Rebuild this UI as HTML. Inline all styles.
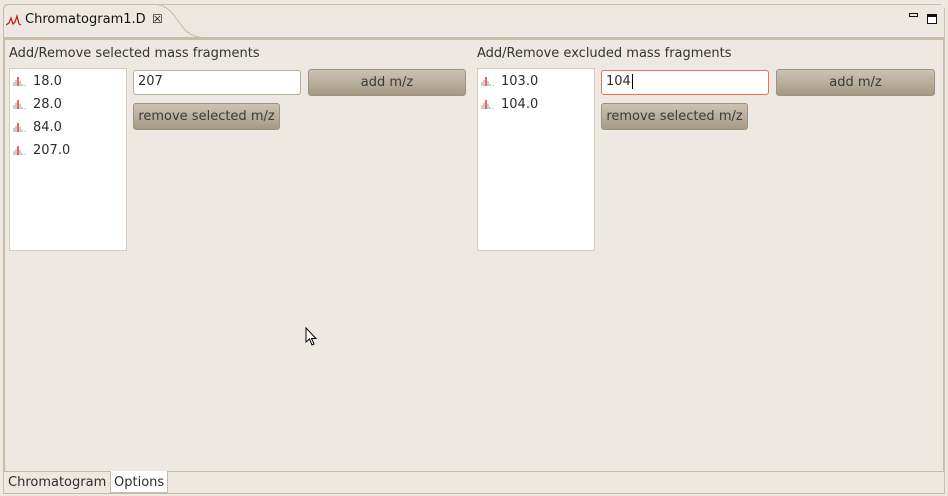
<!DOCTYPE html>
<html><head><style>
*{margin:0;padding:0;box-sizing:border-box}
body{width:948px;height:496px;background:#ede9e2;font-family:"DejaVu Sans","Liberation Sans",sans-serif;font-size:13px;color:#2e2e2e;position:relative;overflow:hidden}
.a{position:absolute}
.frame{left:3px;top:4px;width:942px;height:490px;border:1px solid #c9c0b0;border-radius:6px 6px 0 0;background:#ede9e2}
.hdr{left:4px;top:5px;width:940px;height:33px;background:#ece8e1}
.line{left:4px;top:37px;width:940px;height:3px;background:#c8bca9}
.list{background:#fff;border:1px solid #d6cdbd}
.item{position:absolute;left:3px;font-size:13px}
.ic{display:inline-block;width:14px;height:10px;vertical-align:-1px;margin-right:6px}
.inp{background:#fff;border:1px solid #b8ae9d;border-radius:3px;height:25px;padding:3px 4px;font-size:13px}
.btn{border:1px solid #9e9282;border-radius:3px;background:linear-gradient(#cdc3b3,#a69985);text-align:center;font-size:13px;color:#3a3a3a;line-height:25px;height:27px}
.lbl{font-size:13px;color:#333}
</style></head><body>
<div class="a frame"></div>
<div class="a hdr"></div>
<svg class="a" style="left:3px;top:4px" width="210" height="36"><path d="M0.5 36 V6 Q0.5 0.5 6 0.5 H152 Q162 0.5 170 10 L182 26 Q190 34 205 34" fill="#ede9e2" stroke="#c5bba9"/></svg>
<div class="a line"></div>
<svg class="a" style="left:6px;top:14px" width="16" height="12"><path d="M0 11 L3 9 L5 4 L7 10 L9 8 L11 2 L13 10 L15 11" fill="none" stroke="#d01010" stroke-width="1.2"/></svg>
<div class="a" style="left:25px;top:12px;font-size:13px;color:#111">Chromatogram1.D</div>
<div class="a" style="left:152px;top:12px;font-size:12px;color:#111">&#x2612;</div>
<div class="a" style="left:909px;top:13px;width:9px;height:4px;border:1.5px solid #111"></div>
<div class="a" style="left:927px;top:14px;width:10px;height:10px;border:1.5px solid #111;border-top-width:3px;background:#fff"></div>
<div class="a" style="left:4px;top:40px;width:940px;height:431px;border-left:1px solid #c5bba9;border-right:1px solid #c5bba9"></div>

<div class="a lbl" style="left:9px;top:46px">Add/Remove selected mass fragments</div>
<div class="a list" style="left:9px;top:68px;width:118px;height:183px">
 <div class="item" style="top:5px"><svg class="ic"><path d="M1 10V6M3 10V4M7 10V5M9 10V8M12 10V9" stroke="#999" stroke-width="1"/><path d="M5 10V1" stroke="#d00" stroke-width="1.2"/></svg>18.0</div>
 <div class="item" style="top:28px"><svg class="ic"><path d="M1 10V6M3 10V4M7 10V5M9 10V8M12 10V9" stroke="#999" stroke-width="1"/><path d="M5 10V1" stroke="#d00" stroke-width="1.2"/></svg>28.0</div>
 <div class="item" style="top:51px"><svg class="ic"><path d="M1 10V6M3 10V4M7 10V5M9 10V8M12 10V9" stroke="#999" stroke-width="1"/><path d="M5 10V1" stroke="#d00" stroke-width="1.2"/></svg>84.0</div>
 <div class="item" style="top:74px"><svg class="ic"><path d="M1 10V6M3 10V4M7 10V5M9 10V8M12 10V9" stroke="#999" stroke-width="1"/><path d="M5 10V1" stroke="#d00" stroke-width="1.2"/></svg>207.0</div>
</div>
<div class="a inp" style="left:133px;top:70px;width:168px">207</div>
<div class="a btn" style="left:308px;top:69px;width:158px">add m/z</div>
<div class="a btn" style="left:133px;top:103px;width:147px">remove selected m/z</div>

<div class="a lbl" style="left:477px;top:46px">Add/Remove excluded mass fragments</div>
<div class="a list" style="left:477px;top:68px;width:118px;height:183px">
 <div class="item" style="top:5px"><svg class="ic"><path d="M1 10V6M3 10V4M7 10V5M9 10V8M12 10V9" stroke="#999" stroke-width="1"/><path d="M5 10V1" stroke="#d00" stroke-width="1.2"/></svg>103.0</div>
 <div class="item" style="top:28px"><svg class="ic"><path d="M1 10V6M3 10V4M7 10V5M9 10V8M12 10V9" stroke="#999" stroke-width="1"/><path d="M5 10V1" stroke="#d00" stroke-width="1.2"/></svg>104.0</div>
</div>
<div class="a inp" style="left:601px;top:70px;width:168px;border-color:#f07050">104<span style="border-left:1px solid #000;margin-left:1px"></span></div>
<div class="a btn" style="left:776px;top:69px;width:159px">add m/z</div>
<div class="a btn" style="left:601px;top:103px;width:147px">remove selected m/z</div>

<svg class="a" style="left:305px;top:327px" width="14" height="20"><path d="M1 1 L1 15 L4.5 12 L7 18 L9 17 L6.5 11.5 L11 11.5 Z" fill="#fff" stroke="#000"/></svg>

<div class="a" style="left:4px;top:471px;width:940px;height:1px;background:#c5bba9"></div>
<div class="a" style="left:4px;top:472px;width:106px;height:21px;font-size:13px;padding:3px 0 0 4px">Chromatogram</div>
<div class="a" style="left:110px;top:471px;width:58px;height:22px;background:#fff;border:1px solid #c5bba9;border-top:none;font-size:13px;padding:4px 0 0 3px">Options</div>
<div class="a" style="left:3px;top:493px;width:942px;height:1px;background:#c5bba9"></div>
</body></html>
